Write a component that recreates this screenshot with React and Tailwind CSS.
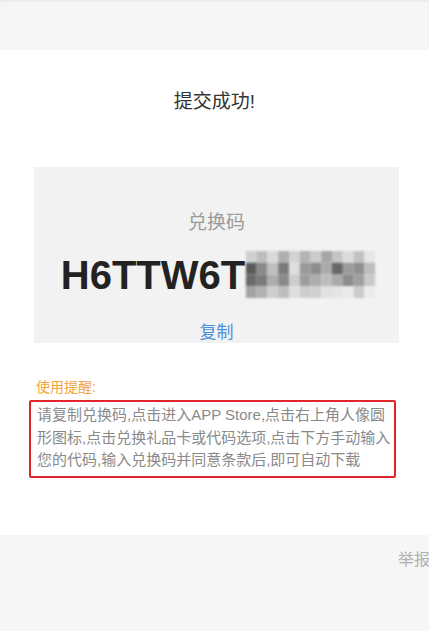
const FONT = { fontFamily: '"Liberation Sans", "Noto Sans CJK SC", sans-serif' }

// pixelated blur that hides the end of the redeem code
const MOSAIC = [
  ['#cfcfcf', '#bdbdbd', '#dadada', '#adadad', '#d2d2d2', '#b3b3b3', '#cbcbcb', '#a5a5a5', '#c4c4c4', '#dcdcdc', '#c1c1c1', '#e6e6e6'],
  ['#5a5a5a', '#8a8a8a', '#bfbfbf', '#7a7a7a', '#dedede', '#9a9a9a', '#8c8c8c', '#aaaaaa', '#676767', '#9b9b9b', '#8f8f8f', '#bdbdbd'],
  ['#6a6a6a', '#7b7b7b', '#acacac', '#8a8a8a', '#cdcdcd', '#9d9d9d', '#adadad', '#bcbcbc', '#a9a9a9', '#8b8b8b', '#9f9f9f', '#c9c9c9'],
  ['#a3a3a3', '#b1b1b1', '#cecece', '#bdbdbd', '#dfdfdf', '#cdcdcd', '#d0d0d0', '#e1e1e1', '#e4e4e4', '#eaeaea', '#cacaca', '#ececec'],
]

function Mosaic() {
  return (
    <svg width="131" height="47" viewBox="0 0 132 48" className="blur-[0.8px] shrink-0">
      {MOSAIC.map((row, r) =>
        row.map((fill, c) => (
          <rect key={`${r}-${c}`} x={c * 11} y={r * 12} width="11" height="12" fill={fill} />
        )),
      )}
    </svg>
  )
}

export default function App() {
  return (
    <div className="w-[429px] h-[631px] flex flex-col bg-[#f6f6f6] overflow-hidden" style={FONT}>
      <div className="h-[50px] shrink-0 shadow-[inset_0_2px_2px_rgba(0,0,0,0.05)]" />

      <div className="bg-white h-[485px] shrink-0 flex flex-col pt-[39px]">
        <h1 className="text-center text-[19px] leading-[26px] text-[#333]">提交成功!</h1>

        <div className="ml-[34px] w-[365px] h-[176px] mt-[52px] bg-[#f2f2f2] flex flex-col items-center">
          <div className="mt-[43px] text-[19px] leading-[26px] text-[#9a9a9a]">兑换码</div>
          <div className="mt-[15px] flex items-center h-[47px] pl-[4px]">
            <span className="text-[40px] leading-none font-bold text-[#222]">H6TTW6T</span>
            <Mosaic />
          </div>
          <button className="mt-[23px] text-[17px] leading-[24px] text-[#4a8fdc]">复制</button>
        </div>

        <div className="ml-[36px] mt-[35px] text-[14px] leading-[18px] text-[#f3a53b]">使用提醒:</div>
        <div className="ml-[29px] w-[367px] h-[78px] mt-[4px] border-2 border-[#e3242b] rounded-[2px] px-[6px] pt-[2px]">
          <p className="text-[15px] leading-[22.5px] text-[#8a8a8a] whitespace-nowrap">
            请复制兑换码,点击进入APP Store,点击右上角人像圆
            <br />
            形图标,点击兑换礼品卡或代码选项,点击下方手动输入
            <br />
            您的代码,输入兑换码并同意条款后,即可自动下载
          </p>
        </div>
      </div>

      <div className="flex justify-end pt-[14px]">
        <span className="text-[16px] leading-[22px] text-[#b0b0b0] mr-[-1px]">举报</span>
      </div>
    </div>
  )
}
